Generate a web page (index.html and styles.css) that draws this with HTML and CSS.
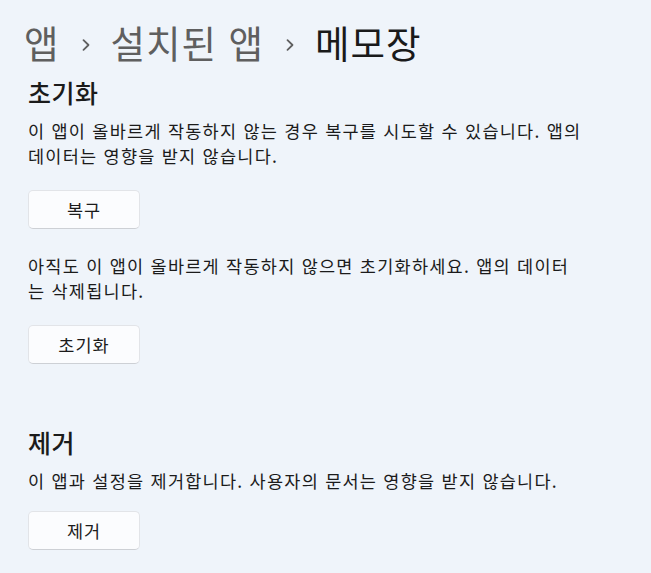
FILE: index.html
```html
<!DOCTYPE html>
<html lang="ko">
<head>
<meta charset="utf-8">
<link rel="stylesheet" href="styles.css">
</head>
<body>
<div class="page">
  <header class="breadcrumb">
    <span class="crumb">앱</span>
    <svg class="sep" width="10" height="14" viewBox="0 0 10 14"><path d="M2.5 2.2 L7.5 7 L2.5 11.8" fill="none" stroke="#5f5f5f" stroke-width="1.8" stroke-linecap="round" stroke-linejoin="round"/></svg>
    <span class="crumb">설치된 앱</span>
    <svg class="sep" width="10" height="14" viewBox="0 0 10 14"><path d="M2.5 2.2 L7.5 7 L2.5 11.8" fill="none" stroke="#5f5f5f" stroke-width="1.8" stroke-linecap="round" stroke-linejoin="round"/></svg>
    <span class="crumb current">메모장</span>
  </header>

  <section class="group">
    <h2 class="group-title">초기화</h2>
    <p class="desc">이 앱이 올바르게 작동하지 않는 경우 복구를 시도할 수 있습니다. 앱의<br>데이터는 영향을 받지 않습니다.</p>
    <button class="btn">복구</button>
    <p class="desc desc-follow">아직도 이 앱이 올바르게 작동하지 않으면 초기화하세요. 앱의 데이터<br>는 삭제됩니다.</p>
    <button class="btn">초기화</button>
  </section>

  <section class="group group-remove">
    <h2 class="group-title">제거</h2>
    <p class="desc">이 앱과 설정을 제거합니다. 사용자의 문서는 영향을 받지 않습니다.</p>
    <button class="btn btn-tight">제거</button>
  </section>
</div>
</body>
</html>
```

FILE: styles.css
```css
html, body {
  margin: 0;
  padding: 0;
  background: #eff4fa;
}
body {
  font-family: "Noto Sans CJK KR", "Noto Sans", sans-serif;
  color: #1b1b1b;
}
.page {
  padding: 18px 0 0 28px;
  width: 620px;
}
.breadcrumb {
  display: flex;
  align-items: center;
  height: 48px;
  margin-left: -4px;
}
.crumb {
  font-size: 37.5px;
  line-height: 48px;
  letter-spacing: 1px;
  color: #5f5f5f;
  white-space: nowrap;
}
.crumb.current {
  color: #1a1a1a;
}
.sep {
  margin: 5px 20px 0 21px;
  flex: none;
}
.group {
  display: flex;
  flex-direction: column;
  align-items: flex-start;
}
.group-title {
  margin: 8px 0 0 0;
  font-size: 25px;
  font-weight: 500;
  line-height: 36px;
  letter-spacing: 0.5px;
}
.desc {
  margin: 8px 0 0 0;
  font-size: 17.5px;
  line-height: 25px;
  letter-spacing: 1.25px;
  color: #1b1b1b;
  white-space: nowrap;
}
.desc-follow {
  margin-top: 24px;
}
.btn {
  margin-top: 22px;
  width: 112px;
  height: 39px;
  font-family: inherit;
  font-size: 17.5px;
  letter-spacing: 1px;
  color: #1b1b1b;
  background: #fbfcfe;
  border: 1px solid #e2e4e8;
  border-bottom-color: #cdd0d5;
  border-radius: 5px;
  padding: 0;
}
.btn-tight {
  margin-top: 18px;
}
.group-remove {
  margin-top: 52px;
}
```
